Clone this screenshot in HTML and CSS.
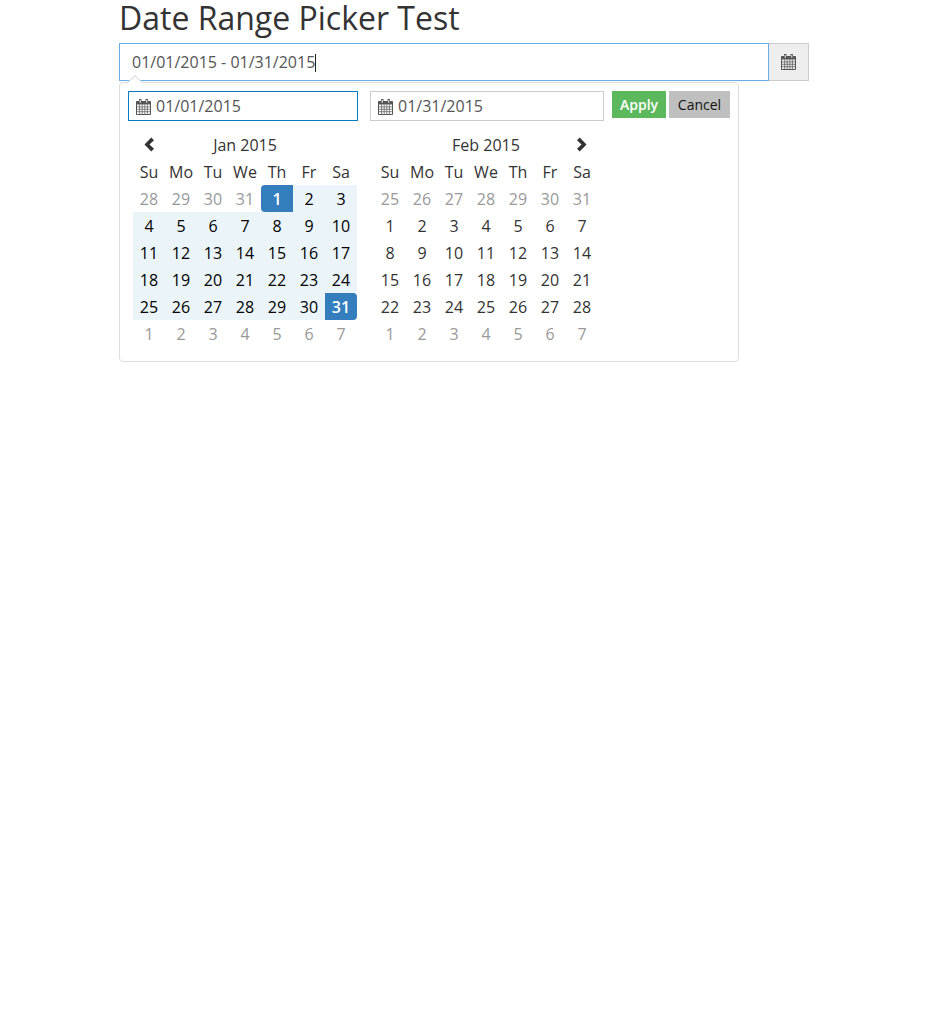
FILE: index.html
```html
<!DOCTYPE html>
<html lang="en">
<head>
    <meta charset="UTF-8">
    <title>Date Range Picker Test</title>
    <link rel="stylesheet" href="styles.css">
</head>
<body>
    <svg class="sprites" width="0" height="0">
        <symbol id="cal" viewBox="0 0 15 16">
            <path fill="currentColor" fill-rule="evenodd" d="M3 0h2.500v2h4V0H12v2h2.200q.8 0 .8.8v12.400q0 .8-.8.8H.8q-.8 0-.8-.8V2.800q0-.8.8-.8H3zM1 5.500V15h13V5.500zM3.700 1v2.800h1V1zm6.600 0v2.800h1V1z"/>
            <path fill="none" stroke="currentColor" stroke-width=".7" d="M1 7.900h13M1 10.300h13M1 12.700h13M3.600 5.500V15M6.200 5.500V15M8.800 5.500V15M11.400 5.500V15"/>
        </symbol>
    </svg>
    <div class="page">
        <h1 class="title">Date Range Picker Test</h1>
        <div class="input-group">
            <div class="range-input">01/01/2015 - 01/31/2015<span class="caret"></span></div>
            <div class="addon"><svg class="icon"><use href="#cal"/></svg></div>
        </div>
        <div class="picker">
            <div class="picker-top">
                <div class="date-field active"><svg class="icon"><use href="#cal"/></svg>01/01/2015</div>
                <div class="date-field second"><svg class="icon"><use href="#cal"/></svg>01/31/2015</div>
                <button class="btn apply">Apply</button>
                <button class="btn cancel">Cancel</button>
            </div>
            <div class="calendars">
                <table class="cal" id="left"></table>
                <table class="cal" id="right"></table>
            </div>
        </div>
    </div>
    <script src="calendar.js"></script>
</body>
</html>
```

FILE: styles.css
```css
body {
    margin: 0;
    background: #fff;
    font-family: "Open Sans", sans-serif;
    font-size: 16px;
    color: #333;
}

.sprites {
    display: block;
}

.page {
    width: 690px;
    margin-left: 119px;
}

.title {
    margin: 0;
    height: 43px;
    font-size: 32px;
    font-weight: 400;
    line-height: 36px;
}

.input-group {
    display: flex;
    height: 38px;
}

.range-input {
    flex: 1;
    border: 1px solid #66afe9;
    padding-left: 12px;
    font-size: 16px;
    line-height: 36px;
    color: #555;
}

.caret {
    display: inline-block;
    width: 1px;
    height: 18px;
    background: #222;
    vertical-align: -4px;
}

.addon {
    display: flex;
    align-items: center;
    justify-content: center;
    width: 39px;
    border: 1px solid #ccc;
    border-left: 0;
    background: #eee;
    color: #555;
}

.icon {
    width: 15px;
    height: 16px;
    flex: none;
}

.picker {
    position: relative;
    box-sizing: border-box;
    width: 620px;
    height: 280px;
    margin-top: 1px;
    padding: 8px;
    border: 1px solid #ddd;
    border-radius: 4px;
    background: #fff;
}

.picker::before {
    content: "";
    position: absolute;
    top: -6px;
    left: 10px;
    width: 9px;
    height: 9px;
    background: #fff;
    border-top: 1px solid #ddd;
    border-left: 1px solid #ddd;
    transform: rotate(45deg);
}

.picker-top {
    display: flex;
    align-items: flex-start;
}

.date-field {
    display: flex;
    align-items: center;
    gap: 5px;
    box-sizing: border-box;
    width: 230px;
    height: 30px;
    padding-left: 7px;
    border: 1px solid #ccc;
    font-size: 16px;
    color: #555;
}

.date-field .icon {
    margin-top: 2px;
}

.date-field.active {
    border-color: #0a7bc1;
}

.date-field.second {
    width: 234px;
    margin-left: 12px;
    margin-right: 8px;
}

.btn {
    height: 27px;
    padding: 0;
    border: 0;
    font-family: inherit;
    font-size: 14px;
}

.apply {
    width: 54px;
    background: #5cb85c;
    color: #fff;
    font-weight: 600;
}

.cancel {
    width: 61px;
    margin-left: 3px;
    background: #bfbfbf;
    color: #111;
}

.calendars {
    display: flex;
    gap: 17px;
    margin-top: 10px;
    margin-left: 5px;
}

.cal {
    border-collapse: separate;
    border-spacing: 0;
    table-layout: fixed;
    width: 224px;
}

.cal th,
.cal td {
    width: 32px;
    height: 27px;
    padding: 0;
    text-align: center;
    font-weight: 400;
    font-size: 16px;
    color: #333;
}

.cal th.month {
    width: 160px;
}

.cal td.off {
    color: #999;
}

.cal td.in-range {
    background: #ebf4f8;
    color: #000;
}

.cal td.start,
.cal td.end {
    background: #357ebd;
    color: #fff;
    font-weight: 600;
}

.cal td.start {
    border-radius: 4px 0 0 4px;
}

.cal td.end {
    border-radius: 0 4px 4px 0;
}

.nav {
    display: block;
    margin: 0 auto;
}
```

FILE: calendar.js
```js
// weeks start on sunday, firstDay is the weekday of the 1st
function buildMonth(id, label, firstDay, days, prevDays, range, nav) {
    const table = document.getElementById(id);
    const chevL = '<svg class="nav" width="12" height="17" viewBox="0 0 12 17"><path fill="#333" d="M1.500 8.500 8.300 1.500 11 4.200 6.500 8.500 11 12.800 8.300 15.500z"/></svg>';
    const chevR = '<svg class="nav" width="12" height="17" viewBox="0 0 12 17"><path fill="#333" d="M10.500 8.500 3.700 1.500 1 4.200 5.500 8.500 1 12.800 3.700 15.500z"/></svg>';
    let html = '<tr><th>' + (nav === 'prev' ? chevL : '') + '</th><th class="month" colspan="5">' + label + '</th><th>' + (nav === 'next' ? chevR : '') + '</th></tr>';
    html += '<tr>' + ['Su', 'Mo', 'Tu', 'We', 'Th', 'Fr', 'Sa'].map(d => '<th>' + d + '</th>').join('') + '</tr>';

    let next = 1;
    for (let i = 0; i < 42; i++) {
        if (i % 7 === 0) html += '<tr>';
        const n = i - firstDay + 1;
        if (n < 1) {
            html += '<td class="off">' + (prevDays + n) + '</td>';
        } else if (n > days) {
            html += '<td class="off">' + next++ + '</td>';
        } else {
            let cls = '';
            if (range) {
                if (n === 1) cls = 'start';
                else if (n === days) cls = 'end';
                else cls = 'in-range';
            }
            html += '<td class="' + cls + '">' + n + '</td>';
        }
        if (i % 7 === 6) html += '</tr>';
    }
    table.innerHTML = html;
}

buildMonth('left', 'Jan 2015', 4, 31, 31, true, 'prev');
// february 2015 starts on a sunday, the picker still shows a full week before it
buildMonth('right', 'Feb 2015', 7, 28, 31, false, 'next');
```
